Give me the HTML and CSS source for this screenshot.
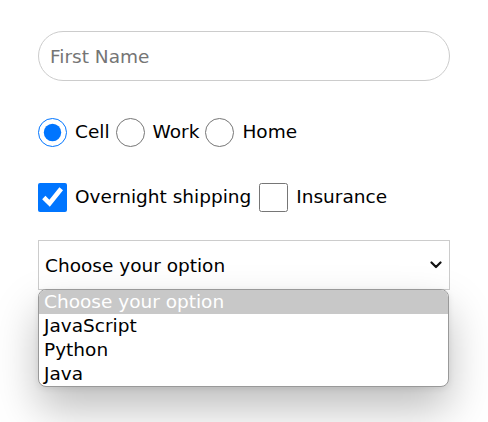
FILE: index.html
```
<!DOCTYPE html>
<html>
<head>
<meta charset="utf-8">
<link rel="stylesheet" href="styles.css">
</head>
<body>
<form class="form">
  <input class="text-input" type="text" placeholder="First Name">
  <div class="row radios">
    <label class="opt"><input class="radio" type="radio" name="phone" checked><span>Cell</span></label>
    <label class="opt"><input class="radio" type="radio" name="phone"><span>Work</span></label>
    <label class="opt"><input class="radio" type="radio" name="phone"><span>Home</span></label>
  </div>
  <div class="row checks">
    <label class="opt"><input class="check" type="checkbox" checked><span>Overnight shipping</span></label>
    <label class="opt"><input class="check" type="checkbox"><span>Insurance</span></label>
  </div>
  <div class="select-wrap">
    <div class="select">
      <span>Choose your option</span>
      <svg class="chevron" width="12" height="8" viewBox="0 0 12 8"><path d="M1.5 1.5 L6 6 L10.5 1.5" fill="none" stroke="#111" stroke-width="2.2" stroke-linecap="round" stroke-linejoin="round"/></svg>
    </div>
    <ul class="popup">
      <li class="item active">Choose your option</li>
      <li class="item">JavaScript</li>
      <li class="item">Python</li>
      <li class="item">Java</li>
    </ul>
  </div>
</form>
</body>
</html>
```
FILE: styles.css
```
html, body {
  margin: 0;
  padding: 0;
  background: #fff;
}
html {
  height: 100%;
}
body {
  min-height: 422px;
  font-family: "DejaVu Sans", Verdana, sans-serif;
  font-size: 18.5px;
  color: #000;
}
.form {
  width: 412px;
  padding: 31px 0 0 38px;
  display: flex;
  flex-direction: column;
}
.text-input {
  box-sizing: border-box;
  width: 412px;
  height: 50px;
  margin: 0;
  border: 1px solid #cccccc;
  border-radius: 25px;
  padding: 0 11px;
  font: inherit;
  color: #000;
  outline: none;
}
.text-input::placeholder {
  color: #757575;
}
.row {
  display: flex;
  align-items: center;
}
.radios {
  margin-top: 36px;
  gap: 6px;
}
.checks {
  margin-top: 35px;
  gap: 8px;
}
.opt {
  display: inline-flex;
  align-items: center;
  gap: 8px;
  line-height: 30px;
}
.radio {
  width: 29px;
  height: 29px;
  margin: 0;
}
.check {
  width: 29px;
  height: 29px;
  margin: 0;
}
.select-wrap {
  position: relative;
  margin-top: 28px;
}
.select {
  box-sizing: border-box;
  width: 412px;
  height: 50px;
  border: 1px solid #cccccc;
  display: flex;
  align-items: center;
  justify-content: space-between;
  padding: 0 7px 0 6px;
}
.chevron {
  display: block;
}
.popup {
  position: absolute;
  left: 0;
  top: 49px;
  width: 411px;
  box-sizing: border-box;
  margin: 0;
  padding: 0;
  list-style: none;
  background: #fff;
  border: 1px solid #999999;
  border-radius: 8px;
  overflow: hidden;
  box-shadow: 0 22px 44px rgba(0, 0, 0, 0.26), 0 2px 6px rgba(0, 0, 0, 0.08);
  z-index: 2;
}
.item {
  height: 24px;
  line-height: 24px;
  padding: 0 5px;
  white-space: nowrap;
}
.item.active {
  background: #c8c8c8;
  color: #fff;
}
```
